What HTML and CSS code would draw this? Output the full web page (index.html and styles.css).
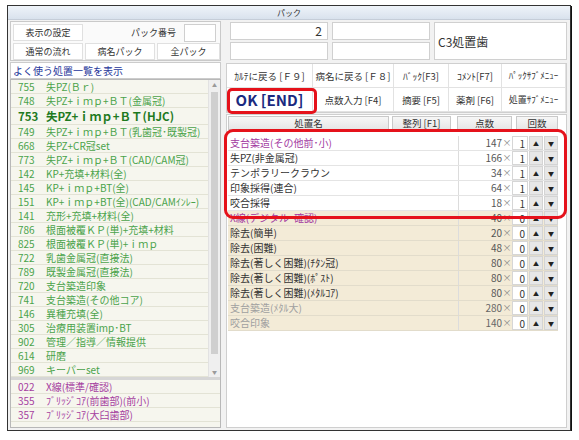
FILE: index.html
```html
<!DOCTYPE html>
<html lang="ja">
<head>
<meta charset="UTF-8" />
<meta name="viewport" content="width=device-width, initial-scale=1" />
<title>パック</title>
<link rel="stylesheet" href="styles.css">
</head>
<body>

<div class="window">
  <div class="titlebar">パック</div>

  <div class="main">
    <!-- left: pack list -->
    <div class="left">
      <div class="pack-box">
        <div class="pack-row">
          <div class="pbtn w70">表示の設定</div>
          <div class="pack-label">パック番号</div>
          <div class="pack-no"></div>
        </div>
        <div class="pack-row">
          <div class="pbtn w70">通常の流れ</div>
          <div class="pbtn w70">病名パック</div>
          <div class="pbtn grow">全パック</div>
        </div>
      </div>

      <div class="fav-link">よく使う処置一覧を表示</div>

      <div class="list-box">
        <div class="fav-wrap">
          <div class="fav-list">
            <div class="item"><span class="code">755</span>失PZ(Ｂｒ)</div>
            <div class="item"><span class="code">748</span>失PZ+ｉｍｐ+ＢＴ(金属冠)</div>
            <div class="item bold"><span class="code">753</span>失PZ+ｉｍｐ+ＢＴ(HJC)</div>
            <div class="item"><span class="code">749</span>失PZ+ｉｍｐ+ＢＴ(乳歯冠･既製冠)</div>
            <div class="item"><span class="code">668</span>失PZ+CR冠set</div>
            <div class="item"><span class="code">773</span>失PZ+ｉｍｐ+ＢＴ(CAD/CAM冠)</div>
            <div class="item"><span class="code">142</span>KP+充填+材料(全)</div>
            <div class="item"><span class="code">145</span>KP+ｉｍｐ+BT(全)</div>
            <div class="item"><span class="code">151</span>KP+ｉｍｐ+BT(全)(CAD/CAMｲﾝﾚｰ)</div>
            <div class="item"><span class="code">141</span>充形+充填+材料(全)</div>
            <div class="item"><span class="code">786</span>根面被覆ＫＰ(単)+充填+材料</div>
            <div class="item"><span class="code">825</span>根面被覆ＫＰ(単)+ｉｍｐ</div>
            <div class="item"><span class="code">722</span>乳歯金属冠(直接法)</div>
            <div class="item"><span class="code">789</span>既製金属冠(直接法)</div>
            <div class="item"><span class="code">720</span>支台築造印象</div>
            <div class="item"><span class="code">741</span>支台築造(その他コア)</div>
            <div class="item"><span class="code">146</span>異種充填(全)</div>
            <div class="item"><span class="code">305</span>治療用装置imp･BT</div>
            <div class="item"><span class="code">902</span>管理／指導／情報提供</div>
            <div class="item"><span class="code">614</span>研磨</div>
            <div class="item"><span class="code">969</span>キーパーset</div>
          </div>
          <div class="scrollbar">
            <div class="sb-arrow">▲</div>
            <div class="sb-track"><div class="sb-thumb"></div></div>
            <div class="sb-arrow">▼</div>
          </div>
        </div>
        <div class="list-sep"></div>
        <div class="sub-list">
          <div class="item sub"><span class="code">022</span>X線(標準/確認)</div>
          <div class="item sub"><span class="code">355</span>ﾌﾞﾘｯｼﾞｺｱ(前歯部)(前小)</div>
          <div class="item sub"><span class="code">357</span>ﾌﾞﾘｯｼﾞｺｱ(大臼歯部)</div>
          <div class="item sub"></div>
        </div>
      </div>
    </div>

    <!-- right: selected procedures -->
    <div class="right">
      <div class="fields">
        <div class="field num">2</div>
        <div class="field"></div>
        <div class="field tooth">C3処置歯</div>
        <div class="field"></div>
        <div class="field"></div>
      </div>

      <div class="fn-grid">
        <div class="fn">ｶﾙﾃに戻る [Ｆ９]</div>
        <div class="fn">病名に戻る [Ｆ８]</div>
        <div class="fn">ﾊﾞｯｸ[F3]</div>
        <div class="fn">ｺﾒﾝﾄ[F7]</div>
        <div class="fn small">ﾊﾟｯｸｻﾌﾞﾒﾆｭｰ</div>
        <div class="fn ok">OK [END]</div>
        <div class="fn">点数入力 [F4]</div>
        <div class="fn">摘要 [F5]</div>
        <div class="fn">薬剤 [F6]</div>
        <div class="fn small">処置ｻﾌﾞﾒﾆｭｰ</div>
      </div>

      <div class="proc-panel">
        <div class="proc-head">
          <div class="hbtn h-name">処置名</div>
          <div class="hbtn h-sort">整列 [F1]</div>
          <div class="hbtn h-pts">点数</div>
          <div class="hbtn h-cnt">回数</div>
        </div>
        <div class="proc-table">
          <div class="proc-row purple"><div class="p-name">支台築造(その他前･小)</div><div class="p-pts">147</div><div class="p-x">×</div><div class="p-cnt">1</div><div class="p-btn">▲</div><div class="p-btn">▼</div></div>
          <div class="proc-row"><div class="p-name">失PZ(非金属冠)</div><div class="p-pts">166</div><div class="p-x">×</div><div class="p-cnt">1</div><div class="p-btn">▲</div><div class="p-btn">▼</div></div>
          <div class="proc-row"><div class="p-name">テンポラリークラウン</div><div class="p-pts">34</div><div class="p-x">×</div><div class="p-cnt">1</div><div class="p-btn">▲</div><div class="p-btn">▼</div></div>
          <div class="proc-row"><div class="p-name">印象採得(連合)</div><div class="p-pts">64</div><div class="p-x">×</div><div class="p-cnt">1</div><div class="p-btn">▲</div><div class="p-btn">▼</div></div>
          <div class="proc-row"><div class="p-name">咬合採得</div><div class="p-pts">18</div><div class="p-x">×</div><div class="p-cnt">1</div><div class="p-btn">▲</div><div class="p-btn">▼</div></div>
          <div class="proc-row off purple"><div class="p-name">X線(デジタル･確認)</div><div class="p-pts">40</div><div class="p-x">×</div><div class="p-cnt">0</div><div class="p-btn">▲</div><div class="p-btn">▼</div></div>
          <div class="proc-row off"><div class="p-name">除去(簡単)</div><div class="p-pts">20</div><div class="p-x">×</div><div class="p-cnt">0</div><div class="p-btn">▲</div><div class="p-btn">▼</div></div>
          <div class="proc-row off"><div class="p-name">除去(困難)</div><div class="p-pts">48</div><div class="p-x">×</div><div class="p-cnt">0</div><div class="p-btn">▲</div><div class="p-btn">▼</div></div>
          <div class="proc-row off"><div class="p-name">除去(著しく困難)(ﾁﾀﾝ冠)</div><div class="p-pts">80</div><div class="p-x">×</div><div class="p-cnt">0</div><div class="p-btn">▲</div><div class="p-btn">▼</div></div>
          <div class="proc-row off"><div class="p-name">除去(著しく困難)(ﾎﾟｽﾄ)</div><div class="p-pts">80</div><div class="p-x">×</div><div class="p-cnt">0</div><div class="p-btn">▲</div><div class="p-btn">▼</div></div>
          <div class="proc-row off"><div class="p-name">除去(著しく困難)(ﾒﾀﾙｺｱ)</div><div class="p-pts">80</div><div class="p-x">×</div><div class="p-cnt">0</div><div class="p-btn">▲</div><div class="p-btn">▼</div></div>
          <div class="proc-row off grey"><div class="p-name">支台築造(ﾒﾀﾙ大)</div><div class="p-pts">280</div><div class="p-x">×</div><div class="p-cnt">0</div><div class="p-btn">▲</div><div class="p-btn">▼</div></div>
          <div class="proc-row off grey"><div class="p-name">咬合印象</div><div class="p-pts">140</div><div class="p-x">×</div><div class="p-cnt">0</div><div class="p-btn">▲</div><div class="p-btn">▼</div></div>
        </div>
      </div>
    </div>
  </div>
</div>

<!-- red annotation frames -->
<div class="mark mark-ok"></div>
<div class="mark mark-rows"></div>

</body>
</html>
```

FILE: styles.css
```css
body, html {
  margin: 0; padding: 0;
  background: #fff;
  font-family: "Noto Sans CJK JP", "Noto Sans", sans-serif;
  color: #333;
}

.window {
  margin: 5px 0 0 7px;
  width: 562px;
  height: 424px;
  border: 1px solid #333;
  box-shadow: 1px 1px 0 #111;
  background: #f2f2f2;
  display: flex;
  flex-direction: column;
}

.titlebar {
  height: 13px;
  line-height: 13px;
  font-size: 8px;
  text-align: center;
  color: #333;
  background: linear-gradient(#eef3f9, #d9e2ed);
  border-bottom: 1px solid #c5cdd8;
}

.main {
  flex: 1;
  display: flex;
  gap: 2px;
  padding: 1px 1px 2px 2px;
  min-height: 0;
}

/* left column */
.left {
  width: 211px;
  display: flex;
  flex-direction: column;
}

.pack-box {
  height: 40px;
  box-sizing: border-box;
  border: 1px solid #c9c9c9;
  background: #fafafa;
  padding: 1px 0 0 2px;
}

.pack-row {
  display: flex;
  align-items: center;
  height: 19px;
}

.pbtn {
  height: 17px;
  line-height: 16px;
  box-sizing: border-box;
  border: 1px solid #e0e0e0;
  background: #fff;
  font-size: 9px;
  text-align: center;
  color: #333;
  margin-right: 2px;
}
.w70 { width: 70px; }
.grow { flex: 1; margin-right: 0; }

.pack-label {
  flex: 1;
  font-size: 9px;
  text-align: right;
  padding-right: 8px;
}

.pack-no {
  width: 32px;
  height: 18px;
  box-sizing: border-box;
  border: 1px solid #cfcfcf;
  background: #fff;
  margin-right: 4px;
}

.fav-link {
  height: 17px;
  box-sizing: border-box;
  margin-top: 1px;
  border: 1px solid #ccc;
  background: #fff;
  font-size: 10px;
  line-height: 15px;
  color: #26369a;
  padding-left: 2px;
}

.list-box {
  flex: 1;
  border: 1px solid #b8b8b8;
  background: #f6f6ee;
  display: flex;
  flex-direction: column;
  min-height: 0;
}

.fav-wrap {
  display: flex;
}

.fav-list {
  flex: 1;
  overflow: hidden;
}

.item {
  height: 14px;
  box-sizing: border-box;
  border-bottom: 1px solid #e3e3d5;
  font-size: 10px;
  line-height: 13px;
  color: #4aa34a;
  padding-left: 7px;
  white-space: nowrap;
  overflow: hidden;
}

.item .code {
  display: inline-block;
  width: 28px;
}

.item.bold {
  height: 17px;
  font-size: 11.5px;
  font-weight: 700;
  line-height: 16px;
  color: #1f7a1f;
}

.item.sub {
  color: #a5409f;
}

.scrollbar {
  width: 11px;
  background: #efefef;
  border-left: 1px solid #e2e2e2;
  display: flex;
  flex-direction: column;
}

.sb-arrow {
  height: 10px;
  font-size: 5px;
  line-height: 10px;
  text-align: center;
  color: #9a9a9a;
}

.sb-track {
  flex: 1;
  padding: 2px 2px;
}

.sb-thumb {
  height: 262px;
  background: #cfcfcf;
}

.list-sep {
  height: 3px;
  background: #d6d6d6;
}

.sub-list {
  flex: 1;
  overflow: hidden;
}

/* right column */
.right {
  flex: 1;
  display: flex;
  flex-direction: column;
}

.fields {
  display: grid;
  grid-template-columns: 98px 98px 1fr;
  grid-template-rows: 18px 18px;
  gap: 2px 4px;
  padding: 1px 2px 0 7px;
}

.field {
  border: 1px solid #d0d0d0;
  background: #fff;
}

.field.num {
  font-size: 12px;
  line-height: 16px;
  text-align: right;
  padding-right: 5px;
}

.field.tooth {
  grid-row: span 2;
  display: flex;
  align-items: center;
  font-size: 12px;
  padding-left: 3px;
}

.fn-grid {
  margin: 3px 2px 0 3px;
  height: 50px;
  box-sizing: border-box;
  border: 1px solid #cfcfcf;
  background: #fff;
  display: grid;
  grid-template-columns: 86px 81px 55px 53px 1fr;
  grid-template-rows: 1fr 1fr;
}

.fn {
  display: flex;
  align-items: center;
  justify-content: center;
  font-size: 9.5px;
  color: #333;
  border-right: 1px solid #e2e2e2;
  border-bottom: 1px solid #e2e2e2;
  white-space: nowrap;
}
.fn.small { font-size: 9px; }

.fn.ok {
  font-size: 15px;
  font-weight: 700;
  color: #1b2a80;
}

.proc-panel {
  flex: 1;
  margin: 1px 2px 0 3px;
  border: 1px solid #cfcfcf;
  background: #fff;
}

.proc-head {
  display: flex;
  height: 14px;
  padding: 1px 0 0 1px;
}

.hbtn {
  box-sizing: border-box;
  border: 1px solid #c9c9c9;
  background: linear-gradient(#f7f7f7, #e6e6e6);
  font-size: 9.5px;
  line-height: 12px;
  text-align: center;
  color: #333;
}
.h-name { width: 161px; }
.h-sort { width: 59px; margin-left: 3px; }
.h-pts  { width: 55px; margin-left: 6px; }
.h-cnt  { width: 42px; margin-left: 4px; }

.proc-table {
  margin: 6px 0 0 1px;
  width: 330px;
}

.proc-row {
  display: flex;
  height: 15px;
  box-sizing: border-box;
  border-bottom: 1px solid #e4e4e4;
  font-size: 10px;
  line-height: 14px;
  color: #333;
}

.proc-row.off { background: #f3ebd7; border-bottom-color: #e2dccb; }
.proc-row.purple { color: #a2379f; }
.proc-row.grey { color: #a0a0a0; }

.p-name {
  width: 229px;
  padding-left: 2px;
  border-right: 1px solid #dcdcdc;
  white-space: nowrap;
  overflow: hidden;
}

.p-pts { width: 43px; text-align: right; color: #555; }
.proc-row.grey .p-pts { color: #666; }

.p-x {
  width: 10px;
  text-align: center;
  font-size: 9px;
  color: #888;
}

.p-cnt {
  width: 16px;
  box-sizing: border-box;
  background: #fff;
  border: 1px solid #d6d6d6;
  text-align: right;
  padding-right: 2px;
  color: #333;
}

.p-btn {
  width: 14px;
  margin-left: 1px;
  background: #e7e7e7;
  border: 1px solid #d4d4d4;
  box-sizing: border-box;
  font-size: 6px;
  line-height: 13px;
  text-align: center;
  color: #222;
}

/* red annotation frames */
.mark {
  position: absolute;
  box-sizing: border-box;
  border: 3px solid #e5121b;
}

.mark-ok {
  left: 227px; top: 88px;
  width: 90px; height: 26px;
  border-radius: 5px;
}

.mark-rows {
  left: 224px; top: 129px;
  width: 343px; height: 90px;
  border-radius: 9px;
}
```
